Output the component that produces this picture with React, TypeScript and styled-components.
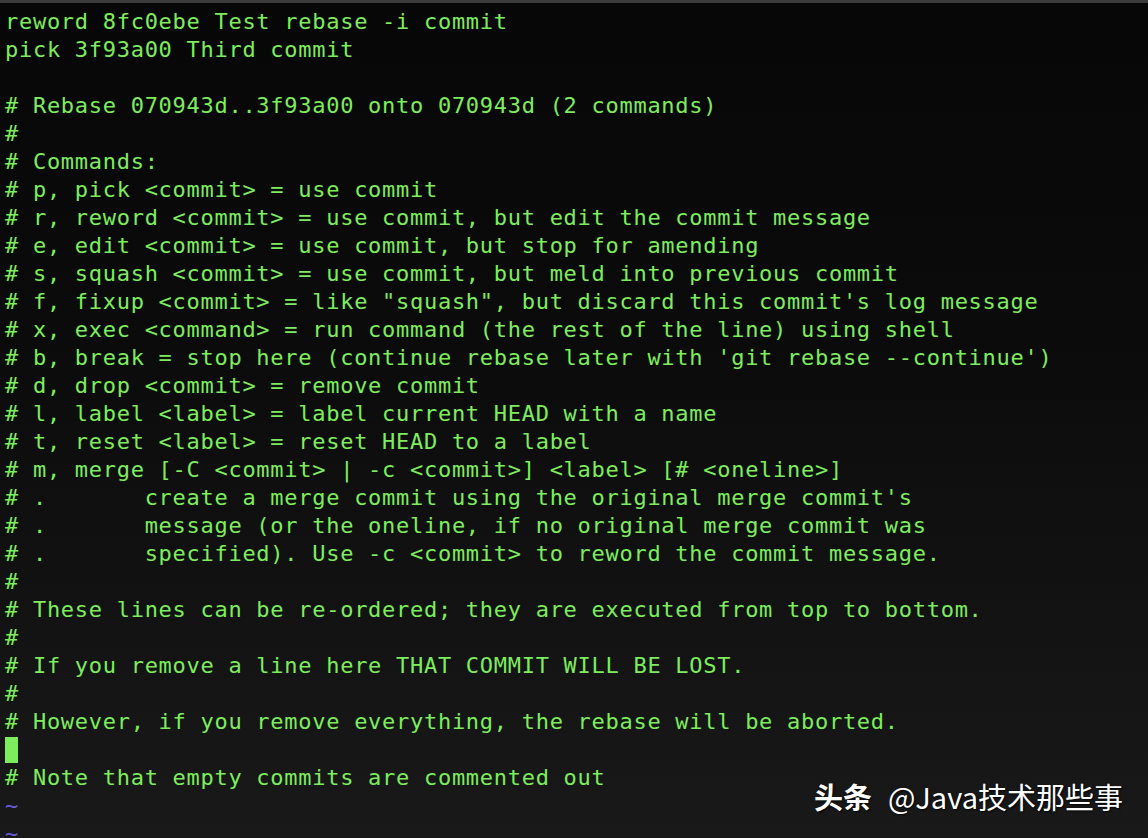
import React from "react";
import styled, { createGlobalStyle } from "styled-components";

const Global = createGlobalStyle`
  html, body { margin: 0; padding: 0; background: #0c0c0c; }
  body { width: 1148px; height: 838px; overflow: hidden; }
`;

const Screen = styled.div`
  position: relative;
  width: 1148px;
  height: 838px;
  overflow: hidden;
  background: linear-gradient(180deg, #070707 0%, #0b0b0b 40%, #131313 75%, #191919 100%);
  border-top: 3px solid #3c3c3c;
  box-sizing: border-box;
`;

const Buffer = styled.div`
  display: flex;
  flex-direction: column;
  padding: 5px 0 0 5px;
  font-family: "DejaVu Sans Mono", "Liberation Mono", monospace;
  font-size: 22px;
  letter-spacing: 0.72px;
  color: #7ded5d;
`;

const Line = styled.div`
  height: 28px;
  line-height: 28px;
  white-space: pre;
`;

const Cursor = styled.span`
  display: inline-block;
  width: 13px;
  height: 26px;
  margin-top: 1px;
  background: #7ded5d;
  vertical-align: top;
`;

const Tilde = styled(Line)`
  color: #6b5ce0;
`;

const Watermark = styled.div`
  position: absolute;
  right: 25px;
  bottom: 24px;
  display: flex;
  align-items: baseline;
  gap: 16px;
  color: #ffffff;
  font-family: "Noto Sans CJK SC", "Noto Sans", sans-serif;
  font-size: 29px;
  line-height: 36px;
  text-shadow: 1px 1px 2px rgba(0, 0, 0, 0.9);
  white-space: nowrap;
`;

const Brand = styled.span`
  font-weight: 700;
`;

const lines: string[] = [
  "reword 8fc0ebe Test rebase -i commit",
  "pick 3f93a00 Third commit",
  "",
  "# Rebase 070943d..3f93a00 onto 070943d (2 commands)",
  "#",
  "# Commands:",
  "# p, pick <commit> = use commit",
  "# r, reword <commit> = use commit, but edit the commit message",
  "# e, edit <commit> = use commit, but stop for amending",
  "# s, squash <commit> = use commit, but meld into previous commit",
  "# f, fixup <commit> = like \"squash\", but discard this commit's log message",
  "# x, exec <command> = run command (the rest of the line) using shell",
  "# b, break = stop here (continue rebase later with 'git rebase --continue')",
  "# d, drop <commit> = remove commit",
  "# l, label <label> = label current HEAD with a name",
  "# t, reset <label> = reset HEAD to a label",
  "# m, merge [-C <commit> | -c <commit>] <label> [# <oneline>]",
  "# .       create a merge commit using the original merge commit's",
  "# .       message (or the oneline, if no original merge commit was",
  "# .       specified). Use -c <commit> to reword the commit message.",
  "#",
  "# These lines can be re-ordered; they are executed from top to bottom.",
  "#",
  "# If you remove a line here THAT COMMIT WILL BE LOST.",
  "#",
  "# However, if you remove everything, the rebase will be aborted.",
];

export default function App() {
  return (
    <>
      <Global />
      <Screen>
        <Buffer>
          {lines.map((l, i) => (
            <Line key={i}>{l}</Line>
          ))}
          <Line>
            <Cursor />
          </Line>
          <Line># Note that empty commits are commented out</Line>
          <Tilde>~</Tilde>
          <Tilde>~</Tilde>
        </Buffer>
        <Watermark>
          <Brand>头条</Brand>
          <span>@Java技术那些事</span>
        </Watermark>
      </Screen>
    </>
  );
}
